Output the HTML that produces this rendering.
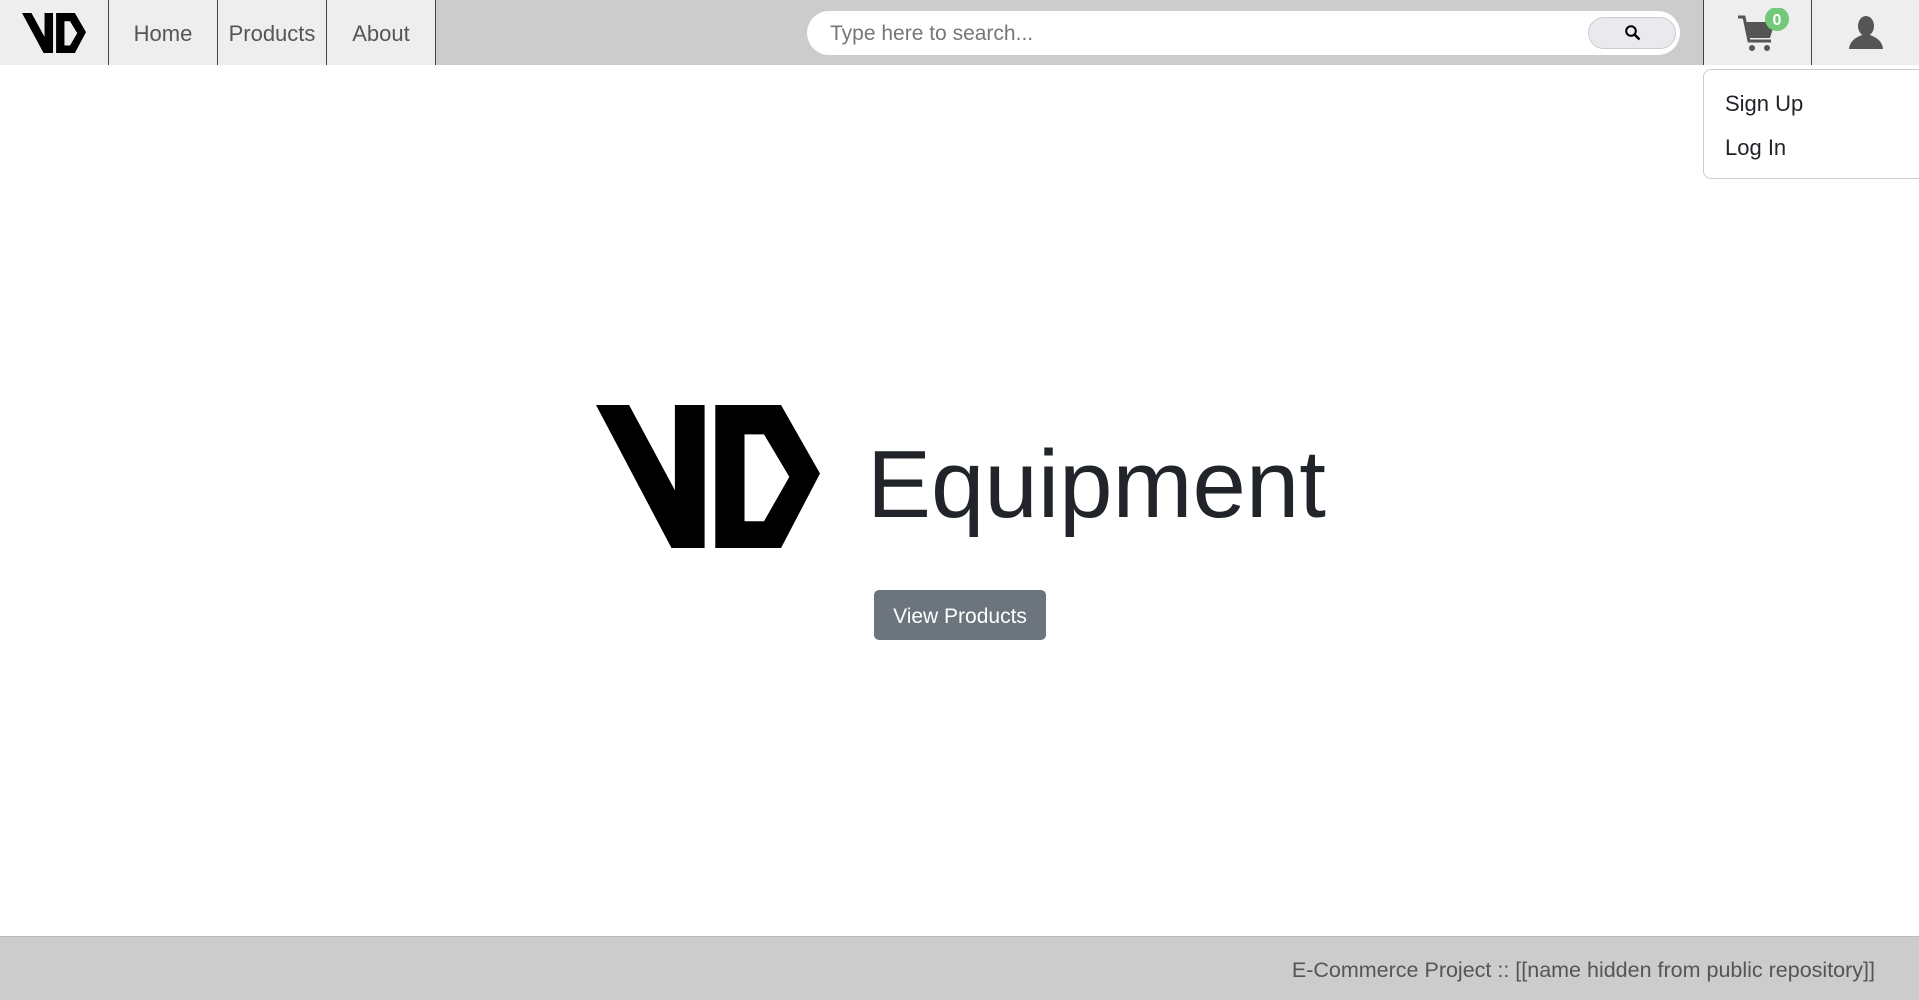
<!DOCTYPE html>
<html><head><meta charset="utf-8"><style>
*{margin:0;padding:0;box-sizing:border-box}
body{width:1919px;height:1000px;background:#fff;font-family:"Liberation Sans",sans-serif;position:relative;overflow:hidden}
.nav{position:absolute;left:0;top:0;width:1919px;height:65px;background:#ccc}
.cell{position:absolute;top:0;height:65px;background:#eee;border-right:1.5px solid #444;color:#555;font-size:22px;display:flex;align-items:center;justify-content:center;padding-top:3px}
.search{position:absolute;left:807px;top:11px;width:873px;height:44px;background:#fff;border-radius:22px}
.search span{position:absolute;left:23px;top:11px;font-size:21px;color:#777}
.sbtn{position:absolute;left:781px;top:6px;width:88px;height:32px;background:#e9e9ee;border:1px solid #ccc;border-radius:16px}
.dd{position:absolute;left:1703px;top:69px;width:222px;height:110px;border:1px solid #ccc;border-radius:8px;background:#fff}
.dd div{position:absolute;left:21px;font-size:22px;color:#212529}
.foot{position:absolute;left:0;top:936px;width:1919px;height:64px;background:#ccc;border-top:1px solid #bbb}
.foot span{position:absolute;right:44px;top:21px;font-size:21.5px;color:#555}
</style></head><body>
<div class="nav">
 <div class="cell" style="left:0;width:109px;padding-top:0">
  <svg width="64" height="40" viewBox="35 45 460 428" preserveAspectRatio="none"><path d="M35 45H103L197 300V45H258V473H190Z M280 45H415L495 250L415 473H280Z M340 133V393H380L432 260L380 133Z" fill="#000" fill-rule="evenodd"/></svg>
 </div>
 <div class="cell" style="left:109px;width:109px">Home</div>
 <div class="cell" style="left:218px;width:109px">Products</div>
 <div class="cell" style="left:327px;width:109px">About</div>
 <div class="search"><span>Type here to search...</span>
  <div class="sbtn"><svg style="position:absolute;left:35px;top:6px" width="18" height="18" viewBox="0 0 18 18"><circle cx="7" cy="7" r="4.8" fill="none" stroke="#000" stroke-width="2"/><path d="M10.5 10.5L15.5 15.5" stroke="#000" stroke-width="2.4"/></svg></div>
 </div>
 <div class="cell" style="left:1703px;width:109px;border-left:1.5px solid #444;padding-top:0">
  <svg width="60" height="50" viewBox="0 0 60 50" style="margin-left:6px">
   <path d="M7 9H13L18 33H40" fill="none" stroke="#555" stroke-width="3"/>
   <path d="M14 14H44L39 30H17Z" fill="#555"/>
   <circle cx="21" cy="40" r="3" fill="#555"/><circle cx="36" cy="40" r="3" fill="#555"/>
   <circle cx="46" cy="11" r="12" fill="#74c87a"/>
   <text x="46" y="17" text-anchor="middle" font-family="Liberation Sans" font-weight="bold" font-size="16" fill="#fff">0</text>
  </svg>
 </div>
 <div class="cell" style="left:1812px;width:107px;border-right:none;padding-top:0">
  <svg width="36" height="34" viewBox="0 0 36 34"><ellipse cx="18" cy="10" rx="8" ry="10" fill="#555"/><path d="M1 33C2 24 9 21 14 19H22C27 21 34 24 35 33Z" fill="#555"/></svg>
 </div>
</div>
<div class="dd"><div style="top:21px">Sign Up</div><div style="top:65px">Log In</div></div>
<svg style="position:absolute;left:596px;top:405px" width="224" height="143" viewBox="35 45 460 428" preserveAspectRatio="none"><path d="M35 45H103L197 300V45H258V473H190Z M280 45H415L495 250L415 473H280Z M340 133V393H380L432 260L380 133Z" fill="#000" fill-rule="evenodd"/></svg>
<div style="position:absolute;left:867px;top:430px;font-size:96px;line-height:110px;color:#212529">Equipment</div>
<div style="position:absolute;left:874px;top:590px;width:172px;height:50px;background:#6c757d;border-radius:5px;color:#fff;font-size:21px;display:flex;align-items:center;justify-content:center;padding-top:3px">View Products</div>
<div class="foot"><span>E-Commerce Project :: [[name hidden from public repository]]</span></div>
</body></html>
